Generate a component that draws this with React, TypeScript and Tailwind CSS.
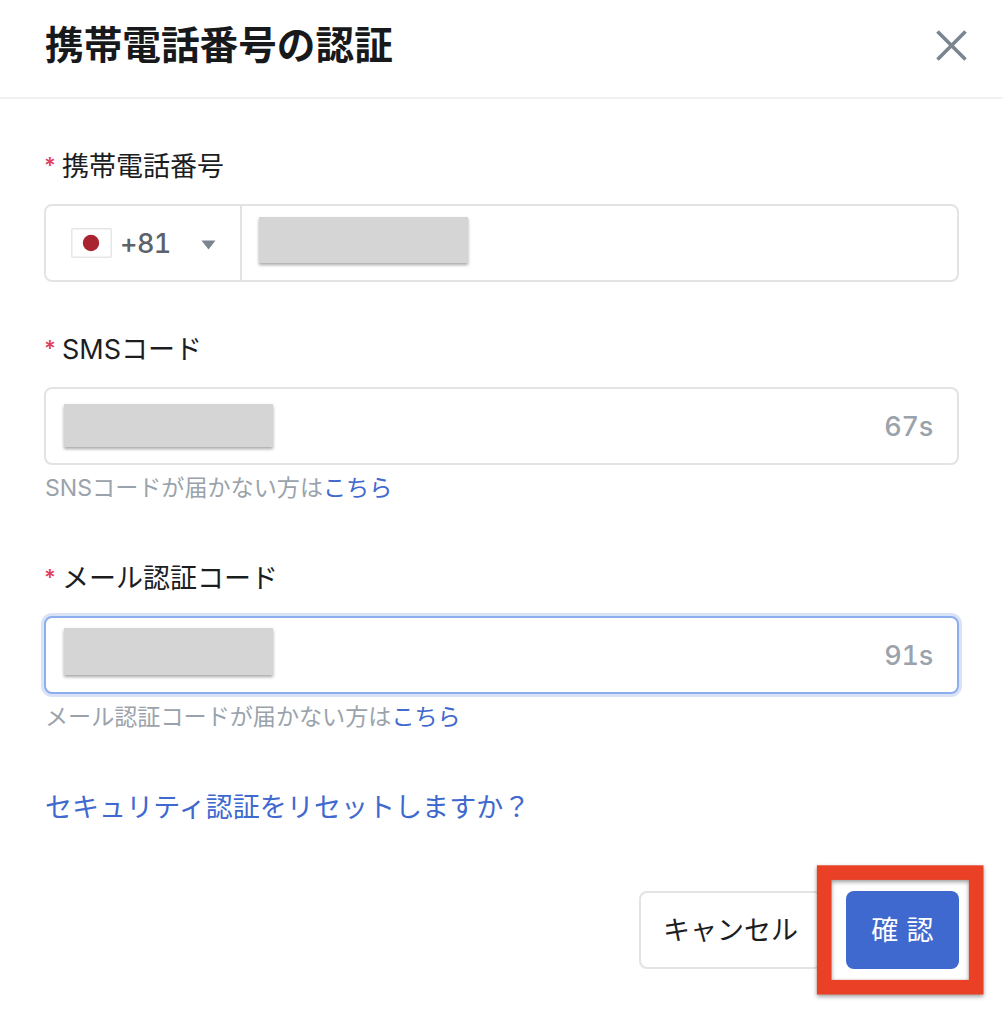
import type { ReactNode } from 'react';
import clsx from 'clsx';

interface FieldProps {
  label: string;
  hint?: string;
  focused?: boolean;
  className?: string;
  children: ReactNode;
}

function Field({ label, hint, focused = false, className = '', children }: FieldProps) {
  return (
    <div className={className}>
      <label className="flex h-10 items-center text-[27px] leading-10 text-[#1b1d1f]">
        <span className="-mt-[4px] w-[18px] text-[22px] font-semibold text-[#e0405f]">*</span>
        {label}
      </label>
      <div
        className={clsx(
          'mt-[17px] flex h-[78px] rounded-[8px] border-2 bg-white',
          focused ? 'border-[#8caeee] ring-[3px] ring-[#dae2f6]' : 'border-[#e1e3e4]'
        )}
      >
        {children}
      </div>
      {hint && (
        <p className="mt-[3px] h-10 pl-px text-[23.1px] leading-10 text-[#9aa3ab]">
          {hint}
          <a className="text-[#3f69cf]">こちら</a>
        </p>
      )}
    </div>
  );
}

function Mask({ className = '' }: { className?: string }) {
  return (
    <div className={clsx('w-[209px] bg-[#d5d5d5] shadow-[0_2px_3px_rgba(0,0,0,0.35)]', className)} />
  );
}

function Countdown({ value }: { value: string }) {
  return (
    <span className="mr-[24px] ml-auto self-center pt-[3px] text-[27px] font-[450] tracking-[-0.3px] text-[#9aa3ab] tabular-nums">
      {value}
    </span>
  );
}

export default function App() {
  return (
    <div className="h-[1024px] w-full overflow-hidden bg-white font-['Inter','Noto_Sans_CJK_JP',sans-serif]">
      {/* Header */}
      <header className="flex h-[99px] items-start justify-between border-b-2 border-[#eff1f2] pr-[36px] pl-[45px]">
        <h1 className="mt-[17px] text-[38.65px] leading-[56px] font-bold text-[#17191b]">
          携帯電話番号の認証
        </h1>
        <button type="button" aria-label="閉じる" className="mt-[30px]">
          <svg width="31" height="31" viewBox="0 0 31 31" fill="none" stroke="#7a858f" strokeWidth="3.6">
            <path d="M1.5 1.5 29.5 29.5M29.5 1.5 1.5 29.5" />
          </svg>
        </button>
      </header>

      <main className="px-[44px] pt-[48px]">
        <Field label="携帯電話番号">
          <div className="flex w-[196px] items-center border-r-2 border-[#e1e3e4] pl-[25px]">
            <svg className="-mt-px" width="41" height="30" viewBox="0 0 41 30">
              <rect x="0.75" y="0.75" width="39.5" height="28.5" rx="1" fill="#fff" stroke="#e6e6e6" strokeWidth="1.5" />
              <circle cx="20" cy="15" r="8.2" fill="#a92331" />
            </svg>
            <span className="ml-[8px] pt-[3px] text-[27px] font-[450] tracking-[-0.6px] text-[#5b626b] tabular-nums">
              +81
            </span>
            <svg className="mt-[3px] mr-[24px] ml-auto" width="15" height="10" viewBox="0 0 15 10">
              <path d="M0.5 0.5h14L7.5 9.5z" fill="#7a858f" />
            </svg>
          </div>
          <Mask className="mt-[11px] ml-[17px] h-[46px]" />
        </Field>

        <Field label="SMSコード" hint="SNSコードが届かない方は" className="mt-[48px]">
          <Mask className="mt-[15px] ml-[18px] h-[43px]" />
          <Countdown value="67s" />
        </Field>

        <Field label="メール認証コード" hint="メール認証コードが届かない方は" focused className="mt-[51px]">
          <Mask className="mt-[10px] ml-[18px] h-[47px]" />
          <Countdown value="91s" />
        </Field>

        <a className="mt-[51px] block h-10 pl-px text-[27px] leading-10 tracking-[0.05px] text-[#3f69cf]">
          セキュリティ認証をリセットしますか？
        </a>

        {/* Actions */}
        <div className="mt-[63px] flex justify-end gap-[24px]">
          <button
            type="button"
            className="h-[78px] w-[183px] rounded-[8px] border-2 border-[#e1e3e4] pt-[2px] text-[27px] text-[#1b1d1f]"
          >
            キャンセル
          </button>
          <div className="relative">
            <button
              type="button"
              className="h-[78px] w-[113px] rounded-[8px] bg-[#3f69cf] pt-[2px] text-[27px] tracking-[0.3px] text-white"
            >
              確 認
            </button>
            {/* Highlight frame */}
            <svg
              className="pointer-events-none absolute -top-[26px] -left-[30px] drop-shadow-[0_2px_2px_rgba(0,0,0,0.4)]"
              width="168"
              height="130"
              viewBox="0 0 168 130"
              fill="none"
            >
              <rect x="8.2" y="7.6" width="152" height="114.6" stroke="#ea4025" strokeWidth="14.6" />
            </svg>
          </div>
        </div>
      </main>
    </div>
  );
}
